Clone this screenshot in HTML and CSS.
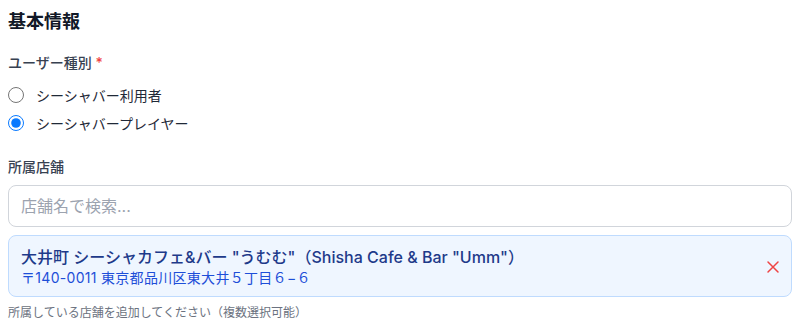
FILE: index.html
```html
<!DOCTYPE html>
<html lang="ja">
<head>
    <meta charset="UTF-8">
    <meta name="viewport" content="width=device-width, initial-scale=1.0">
    <title>基本情報</title>
    <link rel="stylesheet" href="styles.css">
</head>
<body>
    <div class="form">
        <h2 class="section-title">基本情報</h2>

        <!-- ユーザー種別 -->
        <div class="field">
            <div class="label">ユーザー種別 <span class="required">*</span></div>
            <div class="radios">
                <label class="radio-row">
                    <input type="radio" name="userType" value="user">
                    <span>シーシャバー利用者</span>
                </label>
                <label class="radio-row">
                    <input type="radio" name="userType" value="player" checked>
                    <span>シーシャバープレイヤー</span>
                </label>
            </div>
        </div>

        <!-- 所属店舗 -->
        <div class="field shop-field">
            <div class="label">所属店舗</div>
            <input class="search" type="text" placeholder="店舗名で検索...">
            <div class="shop-card">
                <div class="shop-info">
                    <div class="shop-name">大井町 シーシャカフェ&amp;バー "うむむ"（Shisha Cafe &amp; Bar "Umm"）</div>
                    <div class="shop-address">〒140-0011 東京都品川区東大井５丁目６−６</div>
                </div>
                <button class="remove" type="button" aria-label="削除">
                    <svg width="20" height="20" viewBox="0 0 20 20" fill="none" stroke="currentColor" stroke-width="1.5" stroke-linecap="round">
                        <path d="M5 5L15 15M15 5L5 15"/>
                    </svg>
                </button>
            </div>
            <p class="hint">所属している店舗を追加してください（複数選択可能）</p>
        </div>
    </div>
</body>
</html>
```

FILE: styles.css
```css
body
{
    margin: 0; padding: 8px;
    font-family: Inter, "Noto Sans CJK JP", sans-serif;
    color: #1f2937; background-color: #ffffff;
}

.form { width: 784px; }

.section-title
{
    margin: 0 0 17px; font-size: 18px; line-height: 28px;
    font-weight: 700; color: #111827;
}

.label
{
    font-size: 14px; line-height: 20px; font-weight: 500; color: #374151;
}

.required { color: #ef4444; }

.radios
{
    display: flex; flex-direction: column; gap: 4px; margin-top: 10px;
}

.radio-row
{
    display: flex; align-items: center; gap: 12px;
    height: 24px; font-size: 14px; color: #1f2937;
}

.radio-row input
{
    width: 16px; height: 16px; margin: 0; accent-color: #0a7aff;
}

.shop-field { margin-top: 22px; }

.search
{
    display: block; box-sizing: border-box; width: 100%; height: 42px;
    margin-top: 8px; padding: 0 12px;
    border: 1px solid #d1d5db; border-radius: 8px;
    font-family: inherit; font-size: 16px; color: #111827;
}

.search::placeholder { color: #9ca3af; }

.shop-card
{
    display: flex; align-items: center; justify-content: space-between;
    margin-top: 8px; padding: 10px 8px 8px 12px;
    background-color: #eff6ff; border: 1px solid #bfdbfe; border-radius: 8px;
}

.shop-name
{
    font-size: 16px; line-height: 22px; font-weight: 500; color: #1e3a8a;
}

.shop-address
{
    font-size: 14px; line-height: 20px; letter-spacing: 0.3px; color: #1d4ed8;
}

.remove
{
    display: flex; padding: 0; border: none; background: none;
    color: #ef4444; cursor: pointer;
}

.hint
{
    margin: 8px 0 0; font-size: 12px; line-height: 16px; color: #6b7280;
}
```
